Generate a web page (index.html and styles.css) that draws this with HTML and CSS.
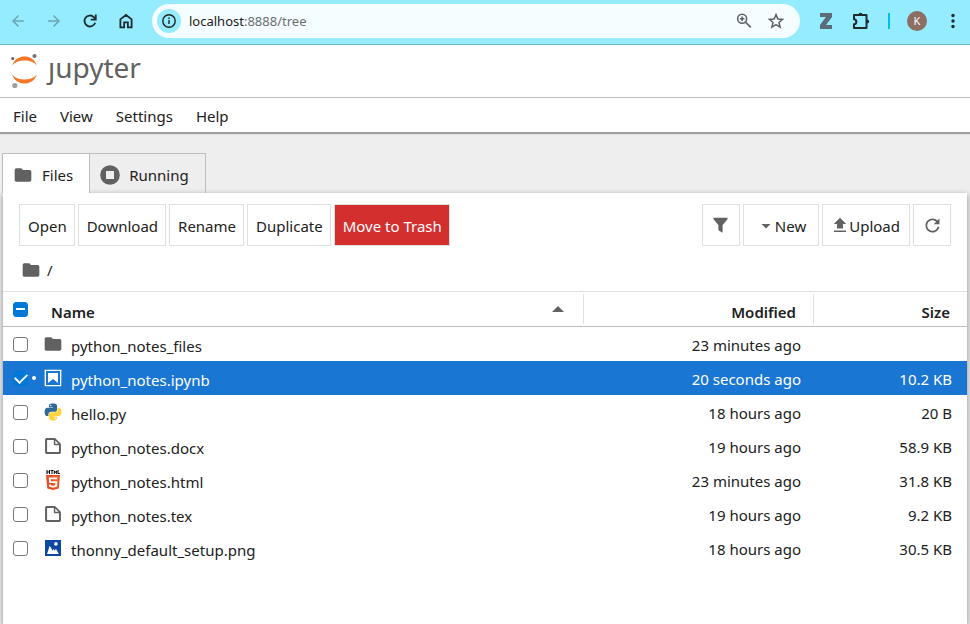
FILE: index.html
```html
<!DOCTYPE html>
<html lang="en">
<head>
<meta charset="utf-8">
<meta name="viewport" content="width=device-width, initial-scale=1">
<title>Home</title>
<link rel="stylesheet" href="styles.css">
</head>
<body>
<svg class="sprite" aria-hidden="true">
  <symbol id="folder" viewBox="0 0 24 24"><path fill="#616161" d="M10 4H4c-1.100 0-2 .9-2 2v12c0 1.100.9 2 2 2h16c1.100 0 2-.9 2-2V8c0-1.100-.9-2-2-2h-8l-2-2z"/></symbol>
  <symbol id="file" viewBox="0 0 22 22"><path fill="#616161" d="M19.300 8.200l-5.500-5.500c-.3-.3-.7-.5-1.200-.5H3.900c-.8.100-1.600.9-1.600 1.800v14.100c0 .9.700 1.600 1.600 1.600h14.200c.9 0 1.600-.7 1.600-1.600V9.400c.1-.5-.1-.9-.4-1.200zm-5.800-3.300l3.400 3.600h-3.400V4.900zm3.900 12.700H4.700c-.1 0-.2 0-.2-.2V4.700c0-.2.1-.3.200-.3h7.200v4.400s0 .8.300 1.100c.3.3 1.100.3 1.100.3h4.300v7.200s-.1.200-.2.200z"/></symbol>
</svg>

<div class="browser">
  <button class="nav dim" aria-label="Back"><svg viewBox="0 0 24 24"><path fill="currentColor" d="M20 11H7.800l5.600-5.600L12 4l-8 8 8 8 1.400-1.400L7.800 13H20z"/></svg></button>
  <button class="nav dim" aria-label="Forward"><svg viewBox="0 0 24 24"><path fill="currentColor" d="M4 11h12.200l-5.600-5.600L12 4l8 8-8 8-1.400-1.400 5.600-5.600H4z"/></svg></button>
  <button class="nav" aria-label="Reload"><svg viewBox="0 0 24 24"><path fill="none" stroke="currentColor" stroke-width="2.400" d="M18.900 14.200A7.300 7.300 0 1 1 17 6.700l2.200 2.300M19.700 3.200v7H13"/></svg></button>
  <button class="nav" aria-label="Home"><svg viewBox="0 0 24 24"><path fill="none" stroke="currentColor" stroke-width="2.400" d="M4.500 20.500V9.800L12 4l7.500 5.800v10.700h-5v-6.700h-5v6.700z"/></svg></button>
  <div class="address">
    <button class="info" aria-label="Site information"><svg viewBox="0 0 16 16"><circle cx="8" cy="8" r="6.200" fill="none" stroke="currentColor" stroke-width="1.400"/><path fill="currentColor" d="M7.300 7h1.400v4H7.300zM7.300 4.600h1.400V6H7.300z"/></svg></button>
    <div class="url"><span class="host">localhost</span>:8888/tree</div>
    <button class="nav grey" aria-label="Zoom"><svg viewBox="0 0 24 24"><g fill="none" stroke="currentColor" stroke-width="2"><circle cx="9.500" cy="9" r="6"/><path d="M14 13.500l7 7M9.500 6v6M6.500 9h6"/></g></svg></button>
    <button class="nav grey" aria-label="Bookmark"><svg viewBox="0 0 24 24"><path fill="none" stroke="currentColor" stroke-width="2" d="M12 3.500l2.500 5.800 6.300.6-4.800 4.100 1.500 6.200-5.500-3.300-5.500 3.300L8 14 3.200 9.900l6.300-.6z"/></svg></button>
  </div>
  <div class="actions">
    <button class="nav ext" aria-label="Zotero"><svg viewBox="0 0 16 16"><path fill="#5c6b79" d="M2 0h12v4L8 12h6v4H2v-4l6-8H2z"/></svg></button>
    <button class="nav puzzle" aria-label="Extensions"><svg viewBox="0 0 20 20"><path fill="none" stroke="currentColor" stroke-width="2" stroke-linejoin="round" d="M3 4h12.500v13H3v-3.700c1.500 0 2.300-1.200 2.300-2.500S4.500 8.300 3 8.300z"/><path fill="currentColor" d="M7.500 4a1.900 2.200 0 0 1 4 0zM16 8.600a2.200 2 0 0 1 0 4z"/></svg></button>
    <span class="bar"></span>
    <button class="avatar" aria-label="Profile">K</button>
    <button class="nav" aria-label="Menu"><svg viewBox="0 0 18 18"><g fill="currentColor"><circle cx="9" cy="3.500" r="1.700"/><circle cx="9" cy="9" r="1.700"/><circle cx="9" cy="14.500" r="1.700"/></g></svg></button>
  </div>
</div>

<header class="brand">
  <svg class="mark" viewBox="0 0 28 36" aria-hidden="true">
    <path fill="#f37726" d="M1 12.500C3.500 6 8.500 3.500 13.500 3.500S23.500 6 26 12.500C23 9 19 7.500 13.500 7.500S4 9 1 12.500z"/>
    <path fill="#f37726" d="M1 21.500c3 3.500 7 5 12.500 5s9.500-1.500 12.500-5c-2.500 6.500-7.500 9-12.500 9s-10-2.500-12.500-9z"/>
    <circle cx="23.500" cy="3" r="2.100" fill="#767677"/><circle cx="1.700" cy="5.500" r="1.500" fill="#616262"/><circle cx="3.800" cy="32.500" r="2.600" fill="#9e9e9e"/>
  </svg>
  <span class="wordmark">ȷupyter</span>
</header>

<nav class="menu">
  <button>File</button><button>View</button><button>Settings</button><button>Help</button>
</nav>

<main>
  <div class="tabs" role="tablist">
    <button class="tab active" role="tab" aria-selected="true"><svg viewBox="0 0 24 24"><use href="#folder"/></svg>Files</button>
    <button class="tab" role="tab" aria-selected="false"><svg viewBox="0 0 20 20"><circle cx="10" cy="10" r="9.800" fill="#616161"/><path fill="#eee" d="M6 6h8v8H6z"/></svg>Running</button>
  </div>
  <section class="panel">
    <div class="toolbar">
      <button>Open</button><button>Download</button><button>Rename</button><button>Duplicate</button><button class="danger">Move to Trash</button>
      <span class="spacer"></span>
      <button class="icon" aria-label="Filter"><svg viewBox="0 0 20 20"><path fill="#616161" d="M3.300 2.500h13.400V4L12 9.500V17l-4-2.500v-5L3.300 4z"/></svg></button>
      <button class="new"><svg viewBox="0 0 18 18"><path fill="#616161" d="M4.500 7h9L9 11.500z"/></svg>New</button>
      <button class="upload"><svg viewBox="0 0 18 18"><path fill="#616161" d="M6 11.500V7H2.800L9 .8 15.200 7H12v4.500zM3 13.500h12V15H3z"/></svg>Upload</button>
      <button class="icon" aria-label="Refresh"><svg viewBox="0 0 18 18"><path fill="#616161" d="M9 13.500c-2.500 0-4.500-2-4.500-4.500s2-4.500 4.500-4.500c1.200 0 2.300.5 3.200 1.300L10 8h5V3l-1.700 1.700C12.200 3.700 10.700 3 9 3 5.700 3 3 5.700 3 9s2.700 6 6 6c2.900 0 5.400-2.200 5.900-5h-1.500c-.5 2-2.300 3.500-4.400 3.500z"/></svg></button>
    </div>
    <div class="crumbs"><svg viewBox="0 0 24 24"><use href="#folder"/></svg><a href="#">/</a></div>
    <table>
      <colgroup><col><col class="c-mod"><col class="c-size"></colgroup>
      <thead><tr>
        <th><div class="cell"><input type="checkbox" class="mixed" aria-label="Select all"><span class="label">Name</span><svg class="sort" viewBox="0 0 12 6"><path fill="#616161" d="M0 6l6-6 6 6z"/></svg></div></th>
        <th><div class="cell end">Modified</div></th><th><div class="cell end">Size</div></th>
      </tr></thead>
      <tbody>
        <tr><td><div class="cell"><input type="checkbox" id="f1"><i></i><svg viewBox="0 0 24 24"><use href="#folder"/></svg><label for="f1">python_notes_files</label></div></td><td>23 minutes ago</td><td></td></tr>
        <tr class="selected"><td><div class="cell"><input type="checkbox" id="f2" checked><i class="dot"></i><svg viewBox="0 0 22 22"><path fill="#fff" d="M18.700 3.300v15.400H3.300V3.300h15.400m1.500-1.500H1.800v18.300h18.300l.1-18.300z"/><path fill="#fff" d="M16.500 16.500l-5.400-4.300-5.600 4.300v-11h11z"/></svg><label for="f2">python_notes.ipynb</label></div></td><td>20 seconds ago</td><td>10.2 KB</td></tr>
        <tr><td><div class="cell"><input type="checkbox" id="f3"><i></i><svg viewBox="-10 -10 131.200 132.400"><path fill="#306998" d="M54.900 0c-4.600 0-9 .4-12.800 1.100C30.800 3.100 28.700 7.300 28.700 15v10.200h26.800v3.400H18.700c-7.800 0-14.600 4.700-16.700 13.600-2.500 10.200-2.600 16.600 0 27.200 1.900 7.900 6.500 13.600 14.200 13.600h9.200V70.800c0-8.800 7.700-16.700 16.800-16.700H69c7.400 0 13.400-6.100 13.400-13.600V15c0-7.300-6.100-12.700-13.400-13.900C64.300.3 59.500 0 54.900 0zM40.400 8.200c2.800 0 5 2.300 5 5.100 0 2.800-2.200 5.100-5 5.100-2.800 0-5-2.300-5-5.100 0-2.800 2.200-5.100 5-5.100z"/><path fill="#ffd43b" d="M85.600 28.700v11.900c0 9.200-7.800 17-16.800 17H42.100c-7.300 0-13.400 6.200-13.400 13.600v25.500c0 7.300 6.300 11.500 13.400 13.600 8.500 2.500 16.600 2.900 26.800 0 6.700-2 13.400-5.900 13.400-13.600V86.500H55.500v-3.400h40.200c7.800 0 10.700-5.400 13.400-13.600 2.800-8.400 2.700-16.500 0-27.200-1.900-7.800-5.600-13.600-13.400-13.600zM70.600 93.300c2.800 0 5 2.300 5 5.100 0 2.800-2.200 5.100-5 5.100-2.800 0-5-2.300-5-5.100 0-2.800 2.200-5.100 5-5.100z"/></svg><label for="f3">hello.py</label></div></td><td>18 hours ago</td><td>20 B</td></tr>
        <tr><td><div class="cell"><input type="checkbox" id="f4"><i></i><svg viewBox="0 0 22 22"><use href="#file"/></svg><label for="f4">python_notes.docx</label></div></td><td>19 hours ago</td><td>58.9 KB</td></tr>
        <tr><td><div class="cell"><input type="checkbox" id="f5"><i></i><svg viewBox="0 0 20 20"><path stroke="#000" stroke-width="1" fill="none" d="M4 0v4M6.500 0v4M4 2h2.500M7.500.5h3M9 .5V4M11.300 4V.8l1.200 1.700L13.700.8V4M15 0v3.500h1.800"/><path fill="#e44d26" d="M3 5h14l-1.300 13.400L10 20l-5.700-1.600z"/><path fill="#f16529" d="M10 6.200h5.800l-1.100 11.300L10 18.800z"/><path fill="none" stroke="#fff" stroke-width="1.800" d="M14.200 8.400H6.700l.3 3.700h6.500l-.4 3.800-3.100.9-3-.9-.1-1.500"/></svg><label for="f5">python_notes.html</label></div></td><td>23 minutes ago</td><td>31.8 KB</td></tr>
        <tr><td><div class="cell"><input type="checkbox" id="f6"><i></i><svg viewBox="0 0 22 22"><use href="#file"/></svg><label for="f6">python_notes.tex</label></div></td><td>19 hours ago</td><td>9.2 KB</td></tr>
        <tr><td><div class="cell"><input type="checkbox" id="f7"><i></i><svg viewBox="0 0 22 22"><path fill="#0d47a1" d="M2.200 2.200h17.600v17.600H2.200z"/><circle cx="14.200" cy="6.500" r="2" fill="#fff"/><path fill="#fff" d="M4.400 17.600l3-9.200 3.300 5.500 1.100-2.200L13 13.900l1.200-2.200 3.300 5.900z"/></svg><label for="f7">thonny_default_setup.png</label></div></td><td>18 hours ago</td><td>30.5 KB</td></tr>
      </tbody>
    </table>
  </section>
</main>
</body>
</html>
```
FILE: styles.css
```css
* { box-sizing: border-box; }
body {
  margin: 0;
  min-height: 100vh;
  display: flex;
  flex-direction: column;
  background: #eee;
  color: #212121;
  font: 15px/20px "Noto Sans", sans-serif;
}
button { font: inherit; color: inherit; border: 0; background: none; padding: 0; }
svg { display: block; flex: none; }
.sprite { position: absolute; width: 0; height: 0; }

.browser {
  display: flex;
  align-items: center;
  gap: 18px;
  height: 45px;
  padding: 0 8px 2px 9px;
  background: #94ecfe;
  border-bottom: 1px solid #73b4c2;
}
.nav { color: #1f2b2e; }
.nav svg { width: 18px; height: 18px; }
.nav.dim { color: #6aa6b2; }
.nav.grey { color: #5a6164; }
.nav.ext svg { width: 16px; height: 16px; }
.nav.puzzle svg { width: 20px; height: 20px; }
.address {
  flex: 1;
  display: flex;
  align-items: center;
  gap: 14px;
  height: 34px;
  margin-left: -1px;
  padding: 0 15px 0 5px;
  border-radius: 17px;
  background: #f4fdff;
}
.info {
  display: grid;
  place-items: center;
  width: 24px;
  height: 24px;
  border-radius: 50%;
  background: #94ecfe;
}
.info svg { width: 16px; height: 16px; }
.url { flex: 1; margin-left: -6px; font-size: 13px; color: #6a6f71; }
.host { color: #1f2122; }
.actions { display: flex; align-items: center; gap: 17px; }
.bar { width: 2px; height: 16px; background: #00bfe0; }
.avatar {
  width: 20px;
  height: 20px;
  border-radius: 50%;
  background: #8d6e63;
  color: #fff;
  font-size: 11px;
}

.brand {
  display: flex;
  gap: 9px;
  height: 53px;
  padding: 8px 11px;
  background: #fff;
  border-bottom: 1px solid #bdbdbd;
}
.mark { width: 28px; height: 36px; }
.wordmark { font-size: 28px; line-height: 28px; color: #616161; }

.menu {
  display: flex;
  gap: 23px;
  height: 35px;
  padding: 2px 13px 0;
  background: #fff;
  border-bottom: 1px solid #9e9e9e;
  box-shadow: 0 1px 1px #9e9e9e;
}

main { flex: 1; display: flex; flex-direction: column; padding: 20px 3px 0; }
.tabs { display: flex; position: relative; margin-left: -1px; }
.tab {
  display: flex;
  align-items: center;
  gap: 9px;
  height: 40px;
  padding: 3px 16px 0 10px;
  border: 1px solid #bdbdbd;
  border-bottom: 0;
  border-left: 0;
}
.tab.active { background: #fff; border-left: 1px solid #bdbdbd; }
.tab svg { width: 20px; height: 20px; }
.panel { flex: 1; background: #fff; box-shadow: 0 2px 6px #888; }

.toolbar { display: flex; gap: 3px; padding: 11px 16px 0; }
.toolbar button {
  display: flex;
  align-items: center;
  height: 42px;
  padding: 2px 7px 0 8px;
  border: 1px solid #e0e0e0;
  background: #fff;
}
.toolbar .danger { background: #d32f2f; color: #fff; }
.toolbar .icon { width: 38px; justify-content: center; padding: 0; }
.toolbar svg { width: 18px; height: 18px; }
.toolbar .icon svg { width: 21px; height: 21px; }
.toolbar .new { padding-left: 13px; padding-right: 12px; }
.toolbar .upload { padding-right: 9px; }
.spacer { flex: 1; }
.crumbs { display: flex; align-items: center; gap: 6px; height: 45px; padding: 3px 18px 0; }
.crumbs svg { width: 20px; height: 20px; }
.crumbs a { color: inherit; text-decoration: none; }

table { width: 100%; table-layout: fixed; border-collapse: separate; border-spacing: 0; }
.c-mod { width: 230px; }
.c-size { width: 154px; }
th, td { padding: 0; text-align: right; }
th {
  height: 36px;
  border-top: 1px solid #e0e0e0;
  border-bottom: 1px solid #bdbdbd;
  font-weight: 600;
}
td { height: 34px; padding: 2px 12px 0 0; }
td:last-child { padding-right: 15px; }
.cell { display: flex; align-items: center; text-align: left; }
td:first-child { padding: 0; }
th .cell { height: 30px; }
th .end { justify-content: flex-end; padding: 6px 17px 0 0; border-left: 1px solid #e0e0e0; }
.label { flex: 1; margin-left: 23px; padding-top: 6px; }
.sort { width: 12px; height: 6px; margin-right: 19px; }
input {
  appearance: none;
  display: grid;
  place-items: center;
  flex: none;
  width: 15px;
  height: 15px;
  margin: 0 0 0 10px;
  border: 1px solid #767676;
  border-radius: 3px;
  background: #fff;
}
.mixed, input:checked { border-color: #0078d7; background: #0078d7; }
.mixed::after { content: ""; width: 9px; height: 2px; background: #fff; }
input:checked::after {
  content: "";
  width: 10px;
  height: 6px;
  border: solid #fff;
  border-width: 0 0 2px 2px;
  transform: translateY(-1px) rotate(-45deg);
}
i { width: 15px; flex: none; }
td .cell { height: 32px; }
td svg { width: 20px; height: 20px; }
td label { margin-left: 8px; padding-top: 3px; }
.dot::after {
  content: "";
  display: block;
  width: 4px;
  height: 4px;
  margin-left: 4px;
  border-radius: 50%;
  background: #fff;
}
.selected { background: #1976d2; color: #fff; }
```
